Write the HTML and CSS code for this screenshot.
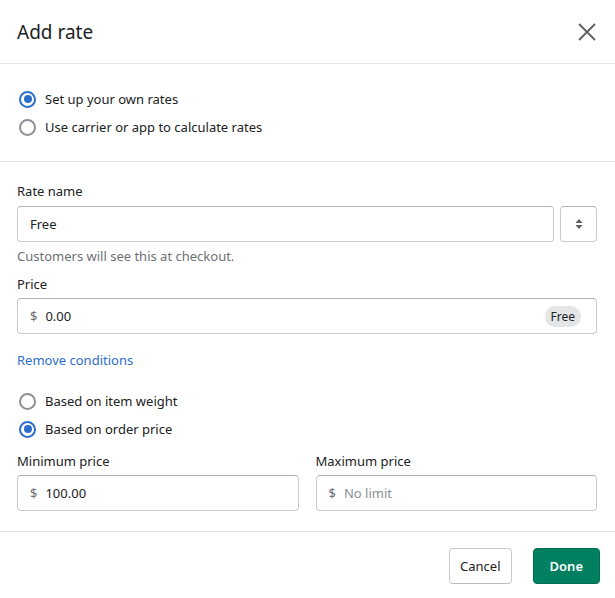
FILE: index.html
```html
<!DOCTYPE html>
<html lang="en">
<head>
  <meta charset="UTF-8" />
  <meta name="viewport" content="width=device-width, initial-scale=1.0">
  <title>Add rate</title>
  <link rel="stylesheet" href="styles.css">
</head>
<body>
  <div class="modal">
    <div class="header">
      <h1>Add rate</h1>
      <button class="close" aria-label="Close">
        <svg width="20" height="20" viewBox="0 0 20 20"><path d="M2 2L18 18M18 2L2 18" stroke="#5c5f62" stroke-width="1.8" fill="none"/></svg>
      </button>
    </div>

    <div class="section choices">
      <label class="radio"><span class="dot checked"></span>Set up your own rates</label>
      <label class="radio"><span class="dot"></span>Use carrier or app to calculate rates</label>
    </div>

    <div class="section form">
      <div class="field">
        <div class="label">Rate name</div>
        <div class="row">
          <div class="input grow">Free</div>
          <div class="select">
            <svg width="10" height="12" viewBox="0 0 10 12"><path d="M5 1L8.5 5H1.5Z M5 11L8.5 7H1.5Z" fill="#5c5f62"/></svg>
          </div>
        </div>
        <div class="help">Customers will see this at checkout.</div>
      </div>

      <div class="field">
        <div class="label">Price</div>
        <div class="input"><span class="prefix">$</span>0.00<span class="badge">Free</span></div>
      </div>

      <a class="link" href="#">Remove conditions</a>

      <div class="conditions">
        <label class="radio"><span class="dot"></span>Based on item weight</label>
        <label class="radio"><span class="dot checked"></span>Based on order price</label>
      </div>

      <div class="pair">
        <div class="field">
          <div class="label">Minimum price</div>
          <div class="input"><span class="prefix">$</span>100.00</div>
        </div>
        <div class="field">
          <div class="label">Maximum price</div>
          <div class="input placeholder"><span class="prefix">$</span>No limit</div>
        </div>
      </div>
    </div>

    <div class="footer">
      <button class="btn cancel">Cancel</button>
      <button class="btn primary">Done</button>
    </div>
  </div>
</body>
</html>
```

FILE: styles.css
```css
body {
  margin: 0;
  font-family: "Noto Sans", "Open Sans", sans-serif;
  font-size: 13px;
  color: #202223;
  background: #fff;
}
.modal {
  width: 615px;
}
.header {
  display: flex;
  align-items: center;
  justify-content: space-between;
  height: 64px;
  padding: 0 18px 0 17px;
  border-bottom: 1px solid #e1e3e5;
  box-sizing: border-box;
}
h1 {
  margin: 0;
  font-size: 19px;
  font-weight: 400;
}
.close {
  background: none;
  border: none;
  padding: 0;
  width: 20px;
  height: 20px;
  cursor: pointer;
}
.section {
  padding: 0 18px 0 17px;
  border-bottom: 1px solid #e1e3e5;
}
.choices {
  padding-top: 21px;
  padding-bottom: 20px;
}
.radio {
  display: flex;
  align-items: center;
  height: 28px;
  gap: 9px;
  padding-left: 2px;
}
.dot {
  width: 13px;
  height: 13px;
  border: 2px solid #8c9196;
  border-radius: 50%;
  box-sizing: content-box;
  position: relative;
}
.dot.checked {
  border-color: #2c6ecb;
}
.dot.checked::after {
  content: "";
  position: absolute;
  top: 2.5px;
  left: 2.5px;
  width: 8px;
  height: 8px;
  border-radius: 50%;
  background: #2c6ecb;
}
.form {
  padding-top: 19px;
  padding-bottom: 20px;
}
.field {
  margin-bottom: 8px;
}
.label {
  line-height: 20px;
  margin-bottom: 4px;
}
.row {
  display: flex;
  gap: 6px;
  padding-top: 1px;
}
.grow {
  flex: 1;
}
.input {
  height: 36px;
  box-sizing: border-box;
  border: 1px solid #c9cccf;
  border-top-color: #aeb4b9;
  border-radius: 4px;
  display: flex;
  align-items: center;
  padding: 0 12px;
}
.prefix {
  color: #6d7175;
  margin-right: 8px;
}
.placeholder {
  color: #8c9196;
}
.badge {
  margin-left: auto;
  background: #e4e5e7;
  border-radius: 11px;
  padding: 2px 6px;
  font-size: 12px;
  color: #202223;
  margin-right: 3px;
}
.select {
  width: 37px;
  height: 36px;
  box-sizing: border-box;
  border: 1px solid #c9cccf;
  border-top-color: #aeb4b9;
  border-radius: 4px;
  display: flex;
  align-items: center;
  justify-content: center;
}
.help {
  color: #6d7175;
  line-height: 20px;
  margin-top: 4px;
}
.link {
  display: block;
  color: #2c6ecb;
  text-decoration: none;
  line-height: 20px;
  margin-top: 16px;
}
.conditions {
  margin-top: 17px;
  margin-bottom: 8px;
}
.pair {
  display: grid;
  grid-template-columns: 1fr 1fr;
  gap: 17px;
}
.pair .field {
  margin-bottom: 0;
}
.footer {
  display: flex;
  justify-content: flex-end;
  gap: 21px;
  padding: 16px 15px 0;
}
.btn {
  font-family: inherit;
  font-size: 13px;
  height: 36px;
  padding: 0 16px;
  background: #fff;
  border: 1px solid #c9cccf;
  border-bottom-color: #babfc3;
  border-radius: 4px;
  color: #202223;
  cursor: pointer;
}
.cancel {
  padding: 0 10px;
}
.primary {
  background: #008060;
  border-color: #006e52;
  color: #fff;
  font-weight: 600;
}
```
